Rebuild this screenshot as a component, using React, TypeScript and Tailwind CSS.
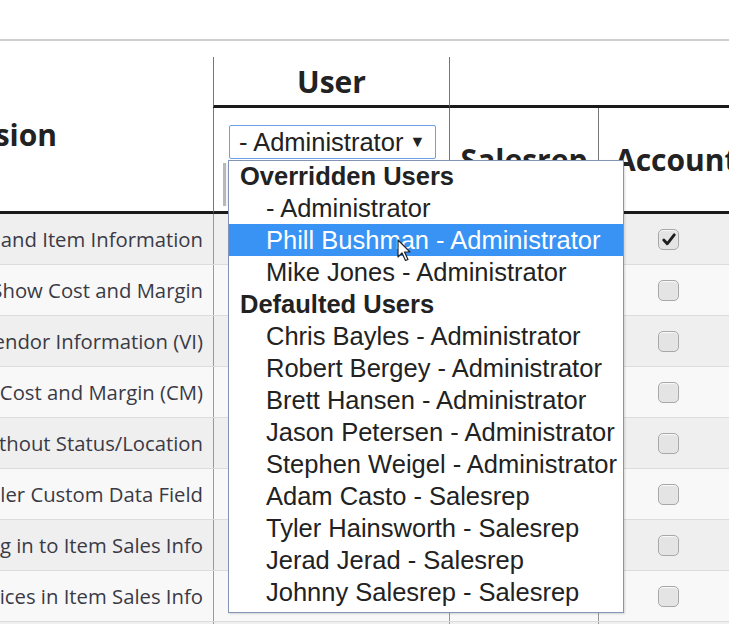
import React from "react";

const bodyRows = [
  "Show Customer and Item Information",
  "Show Cost and Margin",
  "Show Vendor Information (VI)",
  "Hide Cost and Margin (CM)",
  "Show Items Without Status/Location",
  "Edit Reseller Custom Data Field",
  "Allow Drilling in to Item Sales Info",
  "Show Prices in Item Sales Info",
];

type Opt = { label: string; group?: boolean; active?: boolean };
const options: Opt[] = [
  { label: "Overridden Users", group: true },
  { label: "- Administrator" },
  { label: "Phill Bushman - Administrator", active: true },
  { label: "Mike Jones - Administrator" },
  { label: "Defaulted Users", group: true },
  { label: "Chris Bayles - Administrator" },
  { label: "Robert Bergey - Administrator" },
  { label: "Brett Hansen - Administrator" },
  { label: "Jason Petersen - Administrator" },
  { label: "Stephen Weigel - Administrator" },
  { label: "Adam Casto - Salesrep" },
  { label: "Tyler Hainsworth - Salesrep" },
  { label: "Jerad Jerad - Salesrep" },
  { label: "Johnny Salesrep - Salesrep" },
];

function Checkbox({ checked }: { checked?: boolean }) {
  return (
    <div className="w-[21px] h-[21px] rounded-[5px] border border-[#a8a8a8] bg-[#e4e4e4] shadow-[inset_0_1px_1px_rgba(255,255,255,0.8)] flex items-center justify-center">
      {checked && (
        <svg width="14" height="13" viewBox="0 0 14 13">
          <path d="M1.8 7 L5.2 10.8 L12.2 1.8" fill="none" stroke="#1e1e1e" strokeWidth="2.8" strokeLinecap="round" strokeLinejoin="round" />
        </svg>
      )}
    </div>
  );
}

export default function App() {
  return (
    <div className="relative w-[729px] h-[624px] overflow-hidden bg-white font-['Open_Sans',sans-serif] text-[#222]">
      <div className="h-[39px]" />
      <div className="h-[2px] bg-[#cfcfcf]" />
      <div className="h-[16px]" />
      <div className="ml-[-237px] w-[1000px]">
        {/* header */}
        <div className="grid grid-cols-[450px_236px_149px_140px] grid-rows-[51px_106px]">
          <div className="row-span-2 flex items-center justify-center pr-[28px] border-b-[3px] border-[#1a1a1a] text-[30px] font-bold">
            Permission
          </div>
          <div className="border-l border-[#777] border-b-[3px] border-b-[#1a1a1a] flex items-center justify-center text-[30px] font-bold">
            User
          </div>
          <div className="col-span-2 border-l border-[#777] border-b-[3px] border-b-[#1a1a1a]" />
          <div className="border-l border-[#777] border-b-[3px] border-b-[#1a1a1a] pl-[15px] pt-[17px]">
            <div className="w-[207px] h-[34px] border border-[#6f9ee6] rounded-[2px] flex items-center pl-[9px] font-['Liberation_Sans',Arial,sans-serif] text-[25.5px] text-[#222]">
              <span>- Administrator</span>
              <span className="ml-[6px] text-[16px] leading-none">▼</span>
            </div>
            <div className="mt-[4px] ml-[-6px] w-[215px] h-[43px] border-l-[3px] border-[#b8b8b8] bg-[#f4f4f4]" />
          </div>
          <div className="border-l border-[#777] border-b-[3px] border-b-[#1a1a1a] flex items-center justify-center text-[30px] font-bold">
            Salesrep
          </div>
          <div className="border-l border-[#777] border-b-[3px] border-b-[#1a1a1a] flex items-center pl-[16px] text-[30px] font-bold whitespace-nowrap">
            Accounting
          </div>
        </div>
        {/* body */}
        {bodyRows.concat([""]).map((label, i) => (
          <div
            key={i}
            className={`grid grid-cols-[450px_236px_149px_140px] h-[51px] border-b border-[#dcdcdc] ${
              i % 2 === 0 ? "bg-[#efefef]" : "bg-[#f8f8f8]"
            }`}
          >
            <div className="flex items-center justify-end pr-[10px] overflow-hidden whitespace-nowrap text-[20.3px] text-[#3a3a46]">
              <span className="shrink-0">{label}</span>
            </div>
            <div className="border-l border-[#9a9a9a]" />
            <div className="border-l border-[#9a9a9a]" />
            <div className="border-l border-[#9a9a9a] flex items-center justify-center">
              {label && <Checkbox checked={i === 0} />}
            </div>
          </div>
        ))}
      </div>

      {/* dropdown list */}
      <div className="absolute left-[228px] top-[160px] w-[396px] h-[453px] border border-[#8494b4] bg-white font-['Liberation_Sans',Arial,sans-serif] text-[25.5px] text-[#222] shadow-[1px_1px_2px_rgba(0,0,0,0.15)]">
        <div className="-mt-[1px]">
          {options.map((o, i) => (
            <div
              key={i}
              className={`h-[32px] leading-[32px] whitespace-nowrap ${
                o.group ? "pl-[11px] font-bold" : "pl-[37px]"
              } ${o.active ? "bg-[#3993f4] text-white" : ""}`}
            >
              {o.label}
            </div>
          ))}
        </div>
      </div>

      {/* mouse cursor */}
      <svg className="absolute left-[397px] top-[239px]" width="16" height="24" viewBox="0 0 16 24">
        <path d="M1 1 L1 18 L5 14 L8.5 21.5 L11 20.5 L7.5 13 L13 13 Z" fill="white" stroke="#222" strokeWidth="1.2" strokeLinejoin="round" />
      </svg>
    </div>
  );
}
